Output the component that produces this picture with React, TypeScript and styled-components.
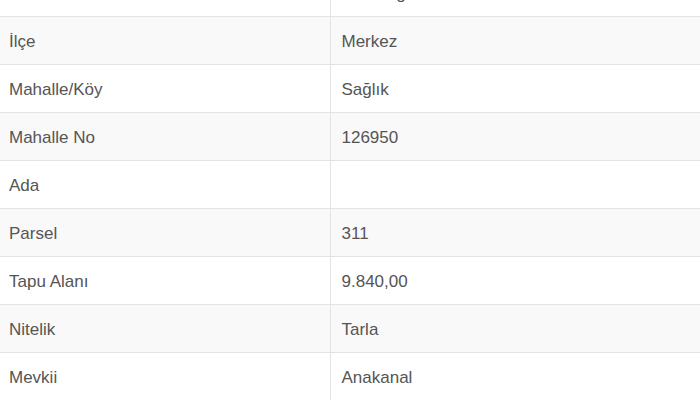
import styled, { createGlobalStyle } from 'styled-components'

const GlobalStyle = createGlobalStyle`
  html, body {
    margin: 0;
    padding: 0;
    background: #fff;
    overflow: hidden;
  }
`

const Wrapper = styled.div`
  width: 700px;
  height: 400px;
  overflow: hidden;
`

const Table = styled.table`
  width: 100%;
  margin-top: -32px;
  border-collapse: collapse;
  table-layout: fixed;
  font-family: 'Liberation Sans', Arial, sans-serif;
  font-size: 17px;
  line-height: 24px;
  color: #555;
`

const Row = styled.tr<{ $striped: boolean }>`
  background: ${(p) => (p.$striped ? '#f9f9f9' : '#fff')};
`

const Label = styled.td`
  width: 330px;
  box-sizing: border-box;
  padding: 13px 10px 10px 9px;
  border-top: 1px solid #e3e3e3;
  border-right: 1px solid #e3e3e3;
  vertical-align: top;
`

const Value = styled.td`
  padding: 13px 10px 10px 11px;
  border-top: 1px solid #e3e3e3;
  vertical-align: top;
`

const rows: [string, string][] = [
  ['İl', 'Tekirdağ'],
  ['İlçe', 'Merkez'],
  ['Mahalle/Köy', 'Sağlık'],
  ['Mahalle No', '126950'],
  ['Ada', ''],
  ['Parsel', '311'],
  ['Tapu Alanı', '9.840,00'],
  ['Nitelik', 'Tarla'],
  ['Mevkii', 'Anakanal'],
]

export default function App() {
  return (
    <Wrapper>
      <GlobalStyle />
      <Table>
        <tbody>
          {rows.map(([label, value], i) => (
            <Row key={label} $striped={i % 2 === 1}>
              <Label>{label}</Label>
              <Value>{value}</Value>
            </Row>
          ))}
        </tbody>
      </Table>
    </Wrapper>
  )
}
